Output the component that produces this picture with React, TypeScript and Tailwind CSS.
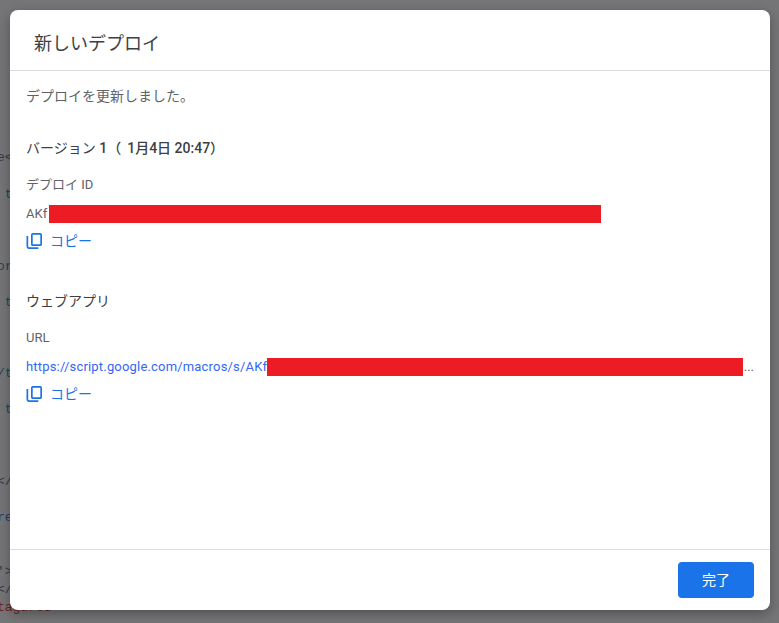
const jp = "font-['Roboto','Noto_Sans_CJK_JP',sans-serif]"

function CopyIcon() {
  return (
    <svg width="16" height="16" viewBox="0 0 16 16" className="text-[#1a73e8]" fill="none" stroke="currentColor" strokeWidth="1.7">
      <rect x="5.85" y="0.85" width="9.3" height="11.3" rx="1" />
      <path d="M1.35 3v10.6a1.5 1.5 0 0 0 1.5 1.5h9.5" />
    </svg>
  )
}

function CopyButton() {
  return (
    <div className="flex h-6 items-center">
      <CopyIcon />
      <span className="ml-2 text-[14px] leading-5 text-[#1a73e8]">コピー</span>
    </div>
  )
}

const codeBits = [
  { top: "top-[150px]", text: "e<", color: "text-[#33393f]" },
  { top: "top-[187px]", text: " t", color: "text-[#1d4550]" },
  { top: "top-[259px]", text: "or", color: "text-[#1d4550]" },
  { top: "top-[295px]", text: " t", color: "text-[#1d4550]" },
  { top: "top-[366px]", text: "/t", color: "text-[#1d4550]" },
  { top: "top-[402px]", text: " t", color: "text-[#1d4550]" },
  { top: "top-[474px]", text: "</", color: "text-[#33393f]" },
  { top: "top-[510px]", text: "re", color: "text-[#1c3a73]" },
  { top: "top-[564px]", text: "'>", color: "text-[#33393f]" },
  { top: "top-[582px]", text: "</", color: "text-[#33393f]" },
  { top: "top-[600px]", text: "tagured >", color: "text-[#6b1f1f]" },
]

export default function App() {
  return (
    <div className={`relative h-[623px] w-[779px] overflow-hidden bg-[#757577] p-[10px] pr-[9px] pb-[13px] ${jp}`}>
      {codeBits.map((b) => (
        <span key={b.top} className={`absolute -left-[3px] ${b.top} whitespace-pre font-['Liberation_Mono',monospace] text-[13px] leading-4 ${b.color}`}>
          {b.text}
        </span>
      ))}
      <div className="relative flex h-full flex-col rounded-lg bg-white shadow-[0_4px_12px_rgba(0,0,0,0.3)]">
        <div className="flex h-[61px] items-center border-b border-[#dadce0] pl-6 pt-[7px] text-[18px] text-[#3c4043]">
          新しいデプロイ
        </div>
        <div className="flex flex-1 flex-col px-4 text-[#5f6368]">
          <p className="mt-[15px] text-[14px] leading-5">デプロイを更新しました。</p>

          <h2 className="mt-[32px] text-[14px] leading-5 text-[#3c4043]">
            バージョン{" "}
            <span className="font-medium">
              1<span className="pr-[6px]">（</span>1月4日 20:47）
            </span>
          </h2>
          <p className="mt-[19px] text-[13px] leading-4">デプロイ ID</p>
          <div className="mt-[12px] flex h-[18px] items-center text-[13px]">
            <span className="w-[23px]">AKf</span>
            <div className="h-[18px] w-[552px] bg-[#ed1c24]" />
          </div>
          <div className="mt-[6px]">
            <CopyButton />
          </div>

          <h2 className="mt-[38px] text-[14px] leading-5 text-[#3c4043]">ウェブアプリ</h2>
          <p className="mt-[19px] text-[13px] leading-4">URL</p>
          <div className="mt-[12px] flex h-[18px] items-center text-[13px]">
            <span className="w-[241px] whitespace-nowrap tracking-[0.18px] text-[#3367f5]">https://script.google.com/macros/s/AKf</span>
            <div className="h-[18px] w-[477px] bg-[#ed1c24]" />
            <span className="ml-[1px] text-[#5f6368]">...</span>
          </div>
          <div className="mt-[6px]">
            <CopyButton />
          </div>
        </div>
        <div className="flex h-[61px] items-center justify-end border-t border-[#dadce0] pr-4">
          <button className="h-9 w-[76px] rounded bg-[#1a73e8] text-[14px] text-white">完了</button>
        </div>
      </div>
    </div>
  )
}
